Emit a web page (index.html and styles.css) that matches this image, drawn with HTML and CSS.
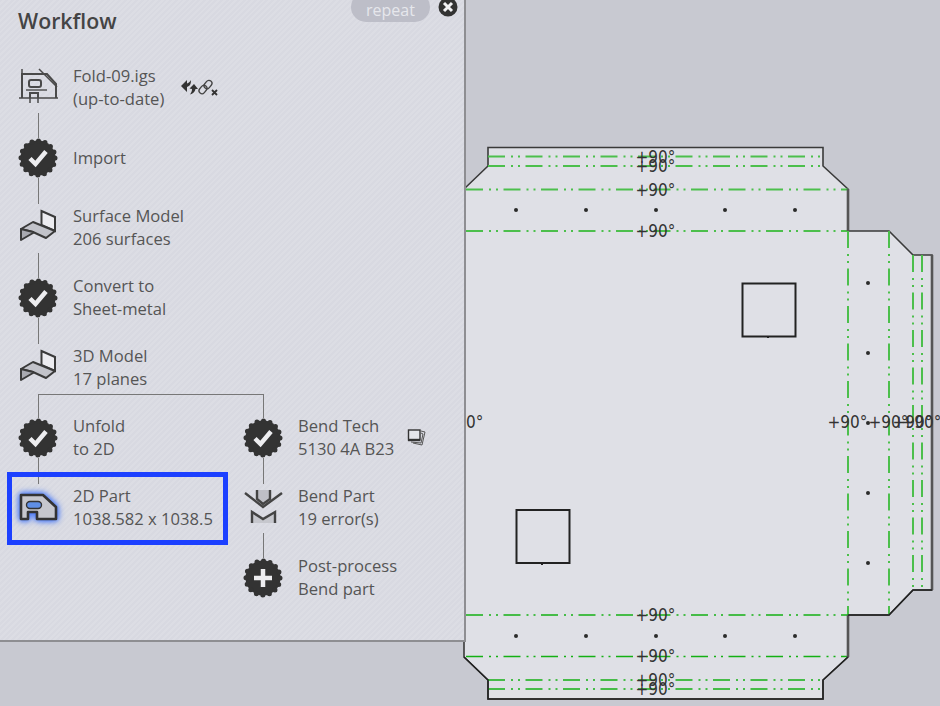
FILE: index.html
```html
<!DOCTYPE html>
<html lang="en">
<head>
    <meta charset="UTF-8">
    <meta name="viewport" content="width=device-width, initial-scale=1.0">
    <title>Workflow</title>
    <link rel="stylesheet" href="styles.css">
</head>
<body>
    <!-- Shared icon shapes -->
    <svg class="defs" width="0" height="0">
        <symbol id="badge" viewBox="-20 -20 40 40">
            <circle r="17.500" fill="#333"/>
            <circle r="17" fill="none" stroke="#333" stroke-width="5" stroke-linecap="round" stroke-dasharray="0 6.676"/>
        </symbol>
        <symbol id="badge-check" viewBox="-20 -20 40 40">
            <use href="#badge" x="-20" y="-20" width="40" height="40"/>
            <path d="M-8 0.500 L-2.500 6 L8 -6.500" fill="none" stroke="#ededf0" stroke-width="4.500"/>
        </symbol>
        <symbol id="model" viewBox="-20 -20 40 40">
            <path d="M3.500 -17 L17 -11 V3 L3.500 -3 Z" fill="#ececf0" stroke="#3a3a3a" stroke-width="2"/>
            <path d="M-17 1 L-5 -6 L17 3 L8 10 L-5 4 Z" fill="#c2c3ca" stroke="#3a3a3a" stroke-width="2" stroke-linejoin="round"/>
            <path d="M-17 1 V12 L-5 5 V4 Z" fill="#a9aab1" stroke="#3a3a3a" stroke-width="2" stroke-linejoin="round"/>
        </symbol>
    </svg>

    <!-- Sheet-metal drawing behind the panel -->
    <svg class="drawing" width="940" height="706" viewBox="0 0 940 706">
        <path class="part" d="M488 147.500 H823 V166 L848 189 V231 H889 L913 255 H932 V590 H913 L889 615 H848 V657 L823 680 V699 H488 V680 L464 657 V189 L488 166 Z"/>

        <g class="bend">
            <path d="M488 156.500 H823"/>
            <path d="M488 166 H823"/>
            <path d="M466 189.500 H848"/>
            <path d="M466 231 H848"/>
            <path d="M848 231 V615"/>
            <path d="M889 231 V615"/>
            <path d="M913 255 V590"/>
            <path d="M922 255 V590"/>
        </g>
        <g class="bend bend-dark">
            <path d="M466 615 H848"/>
            <path d="M466 656.500 H848"/>
            <path d="M488 680 H823"/>
            <path d="M488 689 H823"/>
        </g>

        <!-- Edges are not all drawn at one weight -->
        <path class="edge-heavy" d="M848 189 V231 M932 255 V590 M848 615 V657"/>
        <path class="edge-thin" d="M932 590 H913 L889 615 H848 M848 657 L823 680 V699 H488 V680 L464 657"/>

        <rect class="cutout" x="742.500" y="283.500" width="53" height="53"/>
        <rect class="cutout" x="516.500" y="510" width="53" height="53"/>
        <path class="cutout" d="M768 336 V338 M542 563 V565"/>

        <g class="dots">
            <circle cx="516" cy="210" r="2"/><circle cx="586" cy="210" r="2"/><circle cx="656" cy="210" r="2"/><circle cx="725" cy="210" r="2"/><circle cx="795" cy="210" r="2"/>
            <circle cx="516" cy="636" r="2"/><circle cx="586" cy="636" r="2"/><circle cx="656" cy="636" r="2"/><circle cx="725" cy="636" r="2"/><circle cx="795" cy="636" r="2"/>
            <circle cx="868" cy="283" r="2"/><circle cx="868" cy="353" r="2"/><circle cx="868" cy="423" r="2"/><circle cx="868" cy="493" r="2"/><circle cx="868" cy="563" r="2"/>
        </g>

        <g class="angle">
            <text x="635.500" y="163">+90°</text>
            <text x="635.500" y="172">+90°</text>
            <text x="635.500" y="195.500">+90°</text>
            <text x="635.500" y="236.500">+90°</text>
            <text x="635.500" y="621">+90°</text>
            <text x="635.500" y="662">+90°</text>
            <text x="635.500" y="686">+90°</text>
            <text x="635.500" y="695">+90°</text>
            <text x="443.500" y="428">+90°</text>
            <text x="827.500" y="428">+90°</text>
            <text x="868.500" y="428">+90°</text>
            <text x="892.500" y="428">+90°</text>
            <text x="901.500" y="428">+90°</text>
        </g>
    </svg>

    <!-- Workflow panel -->
    <aside class="panel">
        <header class="panel-head">
            <h1>Workflow</h1>
            <span class="repeat">repeat</span>
            <svg class="close" width="20" height="20" viewBox="-10 -10 20 20">
                <circle r="9.500" fill="#333"/>
                <path d="M-4 -4 L4 4 M4 -4 L-4 4" stroke="#f2f2f4" stroke-width="3"/>
            </svg>
        </header>

        <div class="step">
            <svg class="icon" viewBox="-20 -20 40 40">
                <g fill="none" stroke="#4a4a4a" stroke-width="2">
                    <path d="M-16 10 V-14 H9 L18 -4 V10"/>
                    <path d="M-19 10 H20 M-16 -19 V-11 M-8 5 V15 M0 5 V15 M1 -19 L19 -1" stroke-width="1.500"/>
                    <path d="M-8 10 V5 H0 V10"/>
                    <rect x="-9" y="-8" width="12" height="7" rx="2"/>
                    <path d="M-12 2 H9" stroke-width="1.400"/>
                </g>
            </svg>
            <p>Fold-09.igs<br>(up-to-date)</p>
            <svg class="tools" width="40" height="18" viewBox="0 0 40 18">
                <path d="M1 7 L7 1 V4.500 C8.500 4 10 3 11 1 C11 5 10 7 7 8 V13 Z" fill="#333"/>
                <path d="M14 5 L9.500 9.500 L12 10 C12 12 11.500 13.500 10 15.500 C13 14.500 15 13 15.500 10 L18 10 Z" fill="#333"/>
                <g fill="none" stroke="#444" stroke-width="1.300">
                    <rect x="20" y="6" width="6" height="9" rx="3" transform="rotate(40 23 10.500)"/>
                    <rect x="25" y="1" width="6" height="9" rx="3" transform="rotate(40 28 5.500)"/>
                </g>
                <path d="M32 11 L37 16 M37 11 L32 16" stroke="#333" stroke-width="1.800"/>
            </svg>
        </div>
        <div class="link"></div>
        <div class="step">
            <svg class="icon"><use href="#badge-check"/></svg>
            <p>Import</p>
        </div>
        <div class="link link-after-badge"></div>
        <div class="step">
            <svg class="icon"><use href="#model"/></svg>
            <p>Surface Model<br>206 surfaces</p>
        </div>
        <div class="link"></div>
        <div class="step">
            <svg class="icon"><use href="#badge-check"/></svg>
            <p>Convert to<br>Sheet-metal</p>
        </div>
        <div class="link link-after-badge"></div>
        <div class="step">
            <svg class="icon"><use href="#model"/></svg>
            <p>3D Model<br>17 planes</p>
        </div>

        <div class="branch-rule"></div>
        <div class="branches">
            <div class="branch">
                <div class="link link-branch"></div>
                <div class="step">
                    <svg class="icon"><use href="#badge-check"/></svg>
                    <p>Unfold<br>to 2D</p>
                </div>
                <div class="link link-after-badge"></div>
                <div class="step step-selected">
                    <svg class="icon icon-glow" viewBox="-20 -20 40 40">
                        <path d="M-17 -13 H5 L18 -1 V11 H-1 V4 H-10 V11 H-17 Z" fill="#c6c7cd" stroke="#333" stroke-width="2.600" stroke-linejoin="round"/>
                        <rect x="-11.500" y="-6.500" width="15" height="7" rx="3.500" fill="#5f8fe6" stroke="#333" stroke-width="1.400"/>
                    </svg>
                    <p>2D Part<br>1038.582 x 1038.5</p>
                </div>
            </div>
            <div class="branch">
                <div class="link link-branch"></div>
                <div class="step">
                    <svg class="icon"><use href="#badge-check"/></svg>
                    <p>Bend Tech<br>5130 4A B23</p>
                    <svg class="stack" width="20" height="20" viewBox="0 0 20 20">
                        <path d="M14 3 L18 4 L15 17 L6 15" fill="none" stroke="#555" stroke-width="1"/>
                        <path d="M14 5 L16 6 L14 15 L4 14" fill="none" stroke="#555" stroke-width="1"/>
                        <rect x="1.500" y="2" width="11.500" height="10" fill="#e4e5ea" stroke="#333" stroke-width="1.400"/>
                        <path d="M1 12 H13" stroke="#333" stroke-width="2.400"/>
                    </svg>
                </div>
                <div class="link link-after-badge"></div>
                <div class="step">
                    <svg class="icon" viewBox="-20 -20 40 40">
                        <path d="M-6 -18 V-9 L0 -4 L7 -9 V-18 Z" fill="#bebfc6"/>
                        <path d="M-11 15 V4 L0 11 L12 4 V15 Z" fill="#c6c7cd"/>
                        <g fill="none" stroke="#444" stroke-width="2.400">
                            <path d="M-6 -18 V-9 L0 -4 L7 -9 V-18"/>
                            <path d="M-18 -15 L0 -1 L19 -15"/>
                            <path d="M-11 15 V4 L0 11 L12 4 V15"/>
                        </g>
                    </svg>
                    <p>Bend Part<br>19 error(s)</p>
                </div>
                <div class="link"></div>
                <div class="step">
                    <svg class="icon" viewBox="-20 -20 40 40">
                        <use href="#badge" x="-20" y="-20" width="40" height="40"/>
                        <path d="M-9 0 H9 M0 -9 V9" stroke="#ededf0" stroke-width="4.500"/>
                    </svg>
                    <p>Post-process<br>Bend part</p>
                </div>
            </div>
        </div>
    </aside>
</body>
</html>
```

FILE: styles.css
```css
/* Basic Reset */
*, *::after {
    margin: 0;
    padding: 0;
    box-sizing: border-box;
}

body {
    position: relative;
    width: 940px;
    height: 706px;
    overflow: hidden;
    background-color: #c8c9d1;
    font-family: "Open Sans", "Noto Sans", sans-serif;
}

.defs {
    position: absolute;
}

/* Drawing canvas */
.drawing {
    position: absolute;
    top: 0;
    left: 0;
}

.part {
    fill: #dfe0e6;
    stroke: #3a3a3a;
    stroke-width: 1.600;
}

.edge-heavy {
    fill: none;
    stroke: #555;
    stroke-width: 2.600;
}

.edge-thin {
    fill: none;
    stroke: #222;
    stroke-width: 1.500;
}

.bend path {
    fill: none;
    stroke: #4cbf4c;
    stroke-width: 2;
    stroke-dasharray: 17 6 2 5 2 5.500;
}

.bend-dark path {
    stroke: #14b014;
    stroke-width: 1.600;
}

.cutout {
    fill: none;
    stroke: #222;
    stroke-width: 2;
}

.dots {
    fill: #2b2b2b;
}

.angle text {
    font-family: "DejaVu Sans", sans-serif;
    font-size: 17px;
    font-stretch: condensed;
    fill: #333;
}

/* Panel */
.panel {
    position: relative;
    width: 466px;
    height: 642px;
    border-right: 2px solid #8e8e92;
    border-bottom: 2px solid #8e8e92;
    background: repeating-linear-gradient(135deg, #d8d9e1 0, #d8d9e1 2px, #dcdde4 2px, #dcdde4 4px);
    color: #555;
}

.panel-head {
    display: flex;
    align-items: flex-start;
    height: 63px;
    padding-left: 18px;
}

.panel-head h1 {
    margin-top: 6px;
    font-size: 21.300px;
    font-weight: 600;
    line-height: 30px;
    color: #444;
}

.repeat {
    margin-left: auto;
    margin-top: -8px;
    width: 79px;
    height: 30px;
    padding-top: 8px;
    border-radius: 15px;
    background-color: #bdbec8;
    color: #e6e7ec;
    font-size: 16px;
    line-height: 21px;
    text-align: center;
}

.close {
    margin: -3px 6px 0 8px;
}

/* Steps */
.step {
    position: relative;
    display: flex;
    align-items: center;
    gap: 15px;
    height: 50px;
    padding-left: 18px;
}

.step p {
    margin-top: -2px;
    font-size: 16.600px;
    line-height: 23px;
    white-space: nowrap;
}

.icon {
    position: relative;
    flex: none;
    width: 40px;
    height: 40px;
    overflow: visible;
}

.icon-glow {
    filter: drop-shadow(0 0 3px #3f6ff5) drop-shadow(0 0 2px #6f97f5);
}

.tools {
    margin: 0 0 0 1px;
}

.stack {
    margin: 0 0 0 -2px;
}

/* Selected step frame */
.step-selected::after {
    content: "";
    position: absolute;
    top: -11px;
    left: 7px;
    width: 221px;
    height: 73px;
    border: 5px solid #1c40ff;
}

/* Connectors between steps */
.link {
    width: 1px;
    height: 25px;
    margin: 0 0 -5px 38px;
    background-color: #777;
}

.link-after-badge {
    height: 26px;
    margin: -5px 0 -1px 38px;
}

.link-branch {
    height: 23px;
}

.branch-rule {
    width: 226px;
    height: 1px;
    margin: 1px 0 0 38px;
    background-color: #777;
}

.branches {
    display: grid;
    grid-template-columns: 225px 1fr;
}
```
